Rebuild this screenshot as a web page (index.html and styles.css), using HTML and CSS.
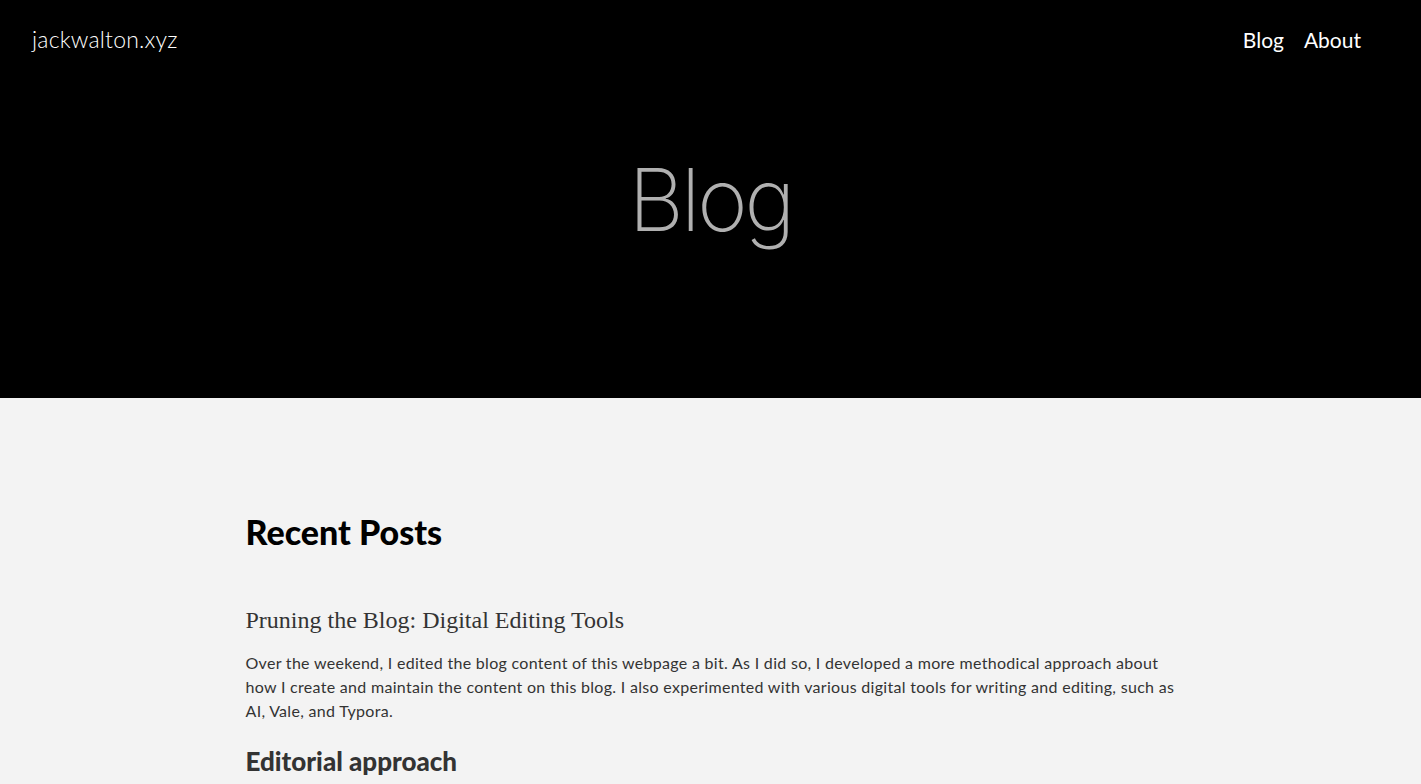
FILE: index.html
```html
<!DOCTYPE html>
<html lang="en">
<head>
<meta charset="utf-8">
<title>Blog - jackwalton.xyz</title>
<link rel="stylesheet" href="styles.css">
</head>
<body>
<header class="hero">
  <nav class="topbar">
    <a class="brand" href="#">jackwalton.xyz</a>
    <div class="links">
      <a href="#">Blog</a>
      <a href="#">About</a>
    </div>
  </nav>
  <h1 class="hero-title">Blog</h1>
</header>
<main class="content">
  <h2 class="section-title">Recent Posts</h2>
  <article class="post">
    <h3 class="post-title">Pruning the Blog: Digital Editing Tools</h3>
    <p class="post-body">Over the weekend, I edited the blog content of this webpage a bit. As I did so, I developed a more methodical approach about how I create and maintain the content on this blog. I also experimented with various digital tools for writing and editing, such as AI, Vale, and Typora.</p>
    <h4 class="post-sub">Editorial approach</h4>
  </article>
</main>
</body>
</html>
```
FILE: styles.css
```css
html, body {
  margin: 0;
  padding: 0;
}
body {
  background: #f3f3f3;
  font-family: Lato, "Noto Sans", sans-serif;
  color: #333;
}
a {
  text-decoration: none;
  color: inherit;
}
.hero {
  background: #000;
  height: 398px;
  display: flex;
  flex-direction: column;
}
.topbar {
  display: flex;
  justify-content: space-between;
  align-items: center;
  padding: 22px 60px 0 32px;
  height: 34px;
}
.brand {
  color: #fff;
  font-size: 23px;
  font-weight: 300;
  letter-spacing: 0.2px;
}
.links {
  display: flex;
  gap: 20px;
}
.links a {
  color: #fff;
  font-size: 21px;
  font-weight: 400;
}
.hero-title {
  margin: 0;
  padding-top: 101px;
  text-align: center;
  color: #b0b0b0;
  font-family: Inter, Lato, sans-serif;
  font-size: 86px;
  font-weight: 200;
  line-height: 1;
  letter-spacing: -3px;
}
.content {
  width: 930px;
  margin: 0 auto;
  padding-top: 112px;
}
.section-title {
  margin: 0;
  font-size: 34px;
  font-weight: 900;
  color: #000;
  line-height: 44px;
}
.post {
  margin-top: 51px;
}
.post-title {
  margin: 0;
  font-family: "Liberation Serif", serif;
  font-weight: 400;
  font-size: 24px;
  line-height: 30px;
  color: #333;
}
.post-body {
  margin: 16px 0 0;
  font-size: 16px;
  line-height: 24px;
  letter-spacing: 0.3px;
  color: #333;
}
.post-sub {
  margin: 22px 0 0;
  font-size: 26px;
  font-weight: 900;
  line-height: 32px;
  color: #333;
}
```
